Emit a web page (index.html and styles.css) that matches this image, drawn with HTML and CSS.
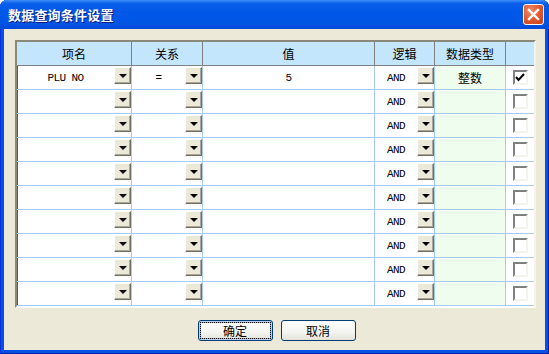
FILE: index.html
```html
<!DOCTYPE html>
<html lang="zh-CN">
<head>
    <meta charset="UTF-8">
    <title>数据查询条件设置</title>
    <link rel="stylesheet" href="styles.css">
</head>
<body>
    <div class="window">
        <div class="titlebar">
            <span class="title">数据查询条件设置</span>
            <span class="close">
                <svg width="13" height="13" viewBox="0 0 13 13"><path d="M2 2 L11 11 M11 2 L2 11" stroke="#fff" stroke-width="2.4" stroke-linecap="square"/></svg>
            </span>
        </div>

        <div class="client">
            <!-- 条件表格 -->
            <div class="grid">
                <div class="row head">
                    <div class="cell">项名</div>
                    <div class="cell">关系</div>
                    <div class="cell">值</div>
                    <div class="cell">逻辑</div>
                    <div class="cell">数据类型</div>
                    <div class="cell"></div>
                </div>

                <div class="row">
                    <div class="cell pick"><span class="val">PLU NO</span><span class="drop"><i></i></span></div>
                    <div class="cell pick"><span class="val">=</span><span class="drop"><i></i></span></div>
                    <div class="cell"><span class="val">5</span></div>
                    <div class="cell pick"><span class="val">AND</span><span class="drop"><i></i></span></div>
                    <div class="cell type">整数</div>
                    <div class="cell check"><span class="box"><svg width="10" height="9" viewBox="0 0 10 9"><path d="M1 4 L3.5 7 L9 1" fill="none" stroke="#000" stroke-width="2"/></svg></span></div>
                </div>
                <div class="row">
                    <div class="cell pick"><span class="val"></span><span class="drop"><i></i></span></div>
                    <div class="cell pick"><span class="val"></span><span class="drop"><i></i></span></div>
                    <div class="cell"></div>
                    <div class="cell pick"><span class="val">AND</span><span class="drop"><i></i></span></div>
                    <div class="cell type"></div>
                    <div class="cell check"><span class="box"></span></div>
                </div>
                <div class="row">
                    <div class="cell pick"><span class="val"></span><span class="drop"><i></i></span></div>
                    <div class="cell pick"><span class="val"></span><span class="drop"><i></i></span></div>
                    <div class="cell"></div>
                    <div class="cell pick"><span class="val">AND</span><span class="drop"><i></i></span></div>
                    <div class="cell type"></div>
                    <div class="cell check"><span class="box"></span></div>
                </div>
                <div class="row">
                    <div class="cell pick"><span class="val"></span><span class="drop"><i></i></span></div>
                    <div class="cell pick"><span class="val"></span><span class="drop"><i></i></span></div>
                    <div class="cell"></div>
                    <div class="cell pick"><span class="val">AND</span><span class="drop"><i></i></span></div>
                    <div class="cell type"></div>
                    <div class="cell check"><span class="box"></span></div>
                </div>
                <div class="row">
                    <div class="cell pick"><span class="val"></span><span class="drop"><i></i></span></div>
                    <div class="cell pick"><span class="val"></span><span class="drop"><i></i></span></div>
                    <div class="cell"></div>
                    <div class="cell pick"><span class="val">AND</span><span class="drop"><i></i></span></div>
                    <div class="cell type"></div>
                    <div class="cell check"><span class="box"></span></div>
                </div>
                <div class="row">
                    <div class="cell pick"><span class="val"></span><span class="drop"><i></i></span></div>
                    <div class="cell pick"><span class="val"></span><span class="drop"><i></i></span></div>
                    <div class="cell"></div>
                    <div class="cell pick"><span class="val">AND</span><span class="drop"><i></i></span></div>
                    <div class="cell type"></div>
                    <div class="cell check"><span class="box"></span></div>
                </div>
                <div class="row">
                    <div class="cell pick"><span class="val"></span><span class="drop"><i></i></span></div>
                    <div class="cell pick"><span class="val"></span><span class="drop"><i></i></span></div>
                    <div class="cell"></div>
                    <div class="cell pick"><span class="val">AND</span><span class="drop"><i></i></span></div>
                    <div class="cell type"></div>
                    <div class="cell check"><span class="box"></span></div>
                </div>
                <div class="row">
                    <div class="cell pick"><span class="val"></span><span class="drop"><i></i></span></div>
                    <div class="cell pick"><span class="val"></span><span class="drop"><i></i></span></div>
                    <div class="cell"></div>
                    <div class="cell pick"><span class="val">AND</span><span class="drop"><i></i></span></div>
                    <div class="cell type"></div>
                    <div class="cell check"><span class="box"></span></div>
                </div>
                <div class="row">
                    <div class="cell pick"><span class="val"></span><span class="drop"><i></i></span></div>
                    <div class="cell pick"><span class="val"></span><span class="drop"><i></i></span></div>
                    <div class="cell"></div>
                    <div class="cell pick"><span class="val">AND</span><span class="drop"><i></i></span></div>
                    <div class="cell type"></div>
                    <div class="cell check"><span class="box"></span></div>
                </div>
                <div class="row">
                    <div class="cell pick"><span class="val"></span><span class="drop"><i></i></span></div>
                    <div class="cell pick"><span class="val"></span><span class="drop"><i></i></span></div>
                    <div class="cell"></div>
                    <div class="cell pick"><span class="val">AND</span><span class="drop"><i></i></span></div>
                    <div class="cell type"></div>
                    <div class="cell check"><span class="box"></span></div>
                </div>
            </div>

            <!-- 按钮 -->
            <div class="buttons">
                <button class="btn default"><span>确定</span></button>
                <button class="btn"><span>取消</span></button>
            </div>
        </div>
    </div>
</body>
</html>
```

FILE: styles.css
```css
* {
    box-sizing: border-box;
}

body {
    margin: 0;
    background: #fff;
    font-family: "Noto Sans CJK SC", "DejaVu Sans", sans-serif;
    font-size: 12px;
    color: #000;
}

.window {
    width: 549px;
    height: 354px;
    display: flex;
    flex-direction: column;
    background: #0550e6;
    border-radius: 7px 7px 0 0;
    box-shadow: inset 1px 0 #0831d9, inset -1px 0 #001ea0, inset 0 -1px #001ea0;
}

.titlebar {
    height: 29px;
    display: flex;
    align-items: center;
    justify-content: space-between;
    padding: 0 5px 0 8px;
    border-radius: 7px 7px 0 0;
    background: linear-gradient(to bottom, #3d8ef8 0%, #0a5fe8 12%, #0058e8 40%, #0055e5 80%, #0048d8 100%);
}

.title {
    color: #fff;
    font-weight: bold;
    font-size: 13px;
    letter-spacing: 0.2px;
    text-shadow: 1px 1px #0a1880;
}

.close {
    width: 21px;
    height: 21px;
    display: flex;
    align-items: center;
    justify-content: center;
    border: 1px solid #fff;
    border-radius: 3px;
    background: radial-gradient(circle at 35% 30%, #f08a64 0%, #e0542a 55%, #c8401c 100%);
}

.client {
    flex: 1;
    margin: 0 4px 4px;
    padding: 11px 9px 0 11px;
    background: #ece9d8;
}

/* tabla */
.grid {
    width: 521px;
    border: 2px solid;
    border-color: #8b8878 #f4f3ee #fff #8b8878;
    box-shadow: inset 1px 1px #5e5c52;
    background: #fff;
}

.row {
    display: grid;
    grid-template-columns: 115px 71px 172px 60px 71px 28px;
    height: 24px;
}

.cell {
    border-right: 1px solid #a6caf0;
    border-bottom: 1px solid #a6caf0;
    display: flex;
    align-items: center;
    justify-content: center;
}

.cell:last-child {
    border-right: none;
}

.head {
    height: 24px;
}

.head .cell {
    background: #c4e6fd;
    border-right-color: #808080;
    border-bottom-color: #808080;
}

.head .cell:last-child {
    border-right: none;
}

.val {
    flex: 1;
    text-align: center;
    font-family: "Liberation Mono", monospace;
    font-size: 11px;
    letter-spacing: -0.6px;
}

.pick {
    align-items: stretch;
}

.pick .val {
    display: flex;
    align-items: center;
    justify-content: center;
}

.drop {
    width: 17px;
    height: 17px;
    margin-top: 1px;
    display: flex;
    align-items: center;
    justify-content: center;
    background: #ece9d8;
    border: 1px solid;
    border-color: #fff #716f64 #716f64 #fff;
    box-shadow: inset -1px -1px #aca899;
}

.drop i {
    width: 0;
    height: 0;
    border-left: 4px solid transparent;
    border-right: 4px solid transparent;
    border-top: 4px solid #000;
    margin-top: 1px;
}

.type {
    background: #eefdee;
}

.box {
    width: 15px;
    height: 15px;
    display: flex;
    align-items: center;
    justify-content: center;
    background: #fff;
    border: 2px solid;
    border-color: #808080 #f4f3ee #f4f3ee #808080;
}

/* botones */
.buttons {
    display: flex;
    justify-content: center;
    gap: 8px;
    margin-top: 12px;
    padding-left: 2px;
}

.btn {
    width: 75px;
    height: 21px;
    padding: 0;
    font-family: "Noto Sans CJK SC", sans-serif;
    font-size: 12px;
    color: #000;
    border: 1px solid #003c74;
    border-radius: 3px;
    background: linear-gradient(to bottom, #fff 0%, #f4f4f0 60%, #e3e2da 100%);
}

.btn.default {
    box-shadow: inset 0 0 0 1px #b8d2f7, inset 0 0 0 2px #8db2e3;
}

.btn.default span {
    display: block;
    margin: 2px;
    line-height: 13px;
    padding: 1px 0;
    outline: 1px dotted #000;
}
```
